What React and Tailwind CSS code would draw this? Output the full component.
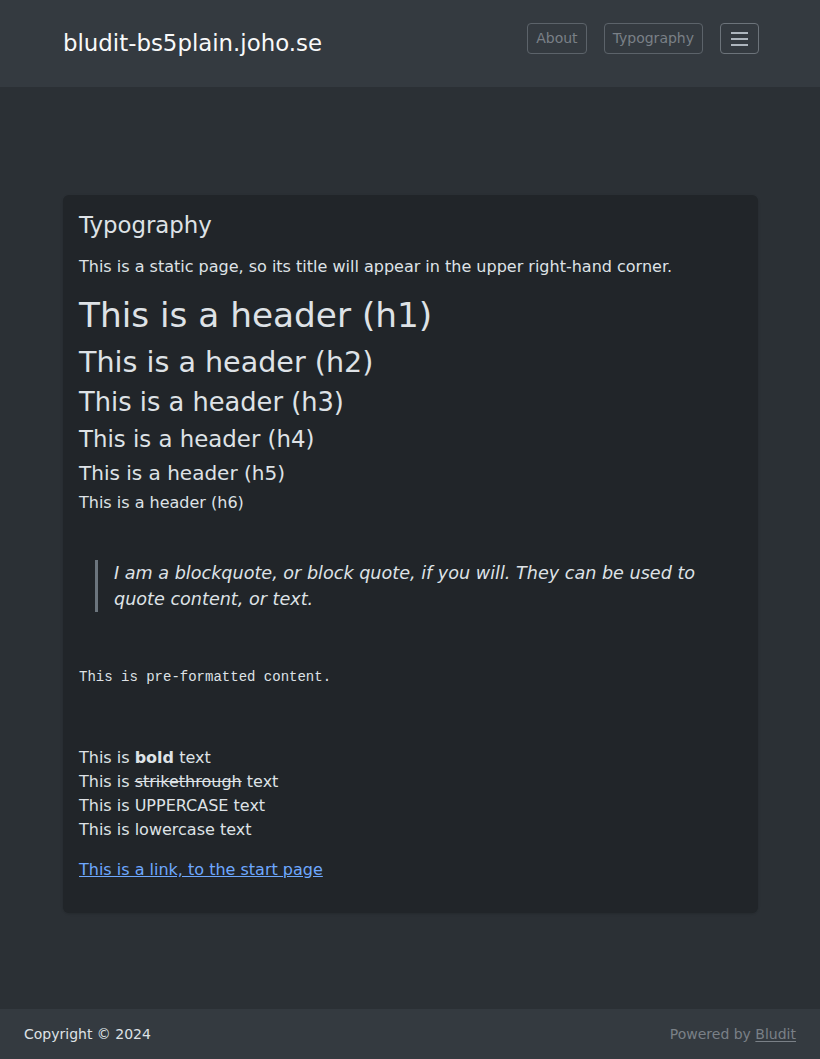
const sans = { fontFamily: '"DejaVu Sans", "Noto Sans", sans-serif' };

function Header() {
  return (
    <header className="h-[87px] bg-[#343a40]">
      <div className="flex items-start justify-between pl-[63px] pr-[61px]">
        <a href="#" className="mt-[26px] text-[22.86px] leading-[34px] text-[#f8f9fa]">
          bludit-bs5plain.joho.se
        </a>
        <nav className="mt-[23px] flex items-start gap-[17px]">
          <a href="#" className="rounded-[4px] border border-[#5c636a] px-2 py-1 text-[14px] leading-[21px] text-[#7a8087]">
            About
          </a>
          <a href="#" className="rounded-[4px] border border-[#5c636a] px-2 py-1 text-[14px] leading-[21px] text-[#7a8087]">
            Typography
          </a>
          <button className="flex h-[31px] w-[39px] flex-col items-center justify-center gap-[4px] rounded-[4px] border border-[#6c737a]">
            <span className="block h-[2px] w-[17px] bg-[#adb5bd]"></span>
            <span className="block h-[2px] w-[17px] bg-[#adb5bd]"></span>
            <span className="block h-[2px] w-[17px] bg-[#adb5bd]"></span>
          </button>
        </nav>
      </div>
    </header>
  );
}

function Footer() {
  return (
    <footer className="flex h-[51px] items-center justify-between bg-[#343a40] px-6 pt-[1px] text-[14px] leading-[21px]">
      <span className="text-[#dee2e6]">Copyright © 2024</span>
      <span className="text-[#7a8087]">
        Powered by <a href="#" className="underline underline-offset-2">Bludit</a>
      </span>
    </footer>
  );
}

export default function App() {
  return (
    <div style={sans} className="flex min-h-screen flex-col bg-[#2b3035] text-[#dee2e6]">
      <Header />

      <main className="flex-1 pt-[108px] pb-[96px]">
        <div className="ml-[63px] w-[695px] rounded-[6px] bg-[#212529] px-4 pt-[17px] pb-[15px] shadow-sm">
          {/* Page title */}
          <h4 className="mb-4 text-[22.86px] leading-[1.2]">Typography</h4>
          <p className="mb-4 text-[16px] leading-[24px]">
            This is a static page, so its title will appear in the upper right-hand corner.
          </p>

          <h1 className="mb-2 text-[34.3px] leading-[1.2]">This is a header (h1)</h1>
          <h2 className="mb-2 text-[28.58px] leading-[1.2]">This is a header (h2)</h2>
          <h3 className="mb-2 text-[25.72px] leading-[1.2]">This is a header (h3)</h3>
          <h4 className="mb-2 text-[22.86px] leading-[1.2]">This is a header (h4)</h4>
          <h5 className="mb-2 text-[20px] leading-[1.2]">This is a header (h5)</h5>
          <h6 className="mb-[47.5px] text-[16px] leading-[1.2]">This is a header (h6)</h6>

          <blockquote className="mb-[55.5px] ml-4 border-l-[3px] border-[#6c757d] pl-4 text-[17.6px] leading-[26px] italic">
            I am a blockquote, or block quote, if you will. They can be used to quote content, or text.
          </blockquote>

          <pre
            className="mb-[57.5px] text-[14px] leading-[21px]"
            style={{ fontFamily: '"Liberation Mono", "DejaVu Sans Mono", monospace' }}
          >
            This is pre-formatted content.
          </pre>

          <p className="mb-4 text-[16px] leading-[24px]">
            This is <strong className="font-bold">bold</strong> text
            <br />
            This is <s>strikethrough</s> text
            <br />
            This is UPPERCASE text
            <br />
            This is lowercase text
          </p>

          <p className="mb-4 text-[16px] leading-[24px]">
            <a href="#" className="text-[#6ea8fe] underline">This is a link, to the start page</a>
          </p>
        </div>
      </main>

      <Footer />
    </div>
  );
}
